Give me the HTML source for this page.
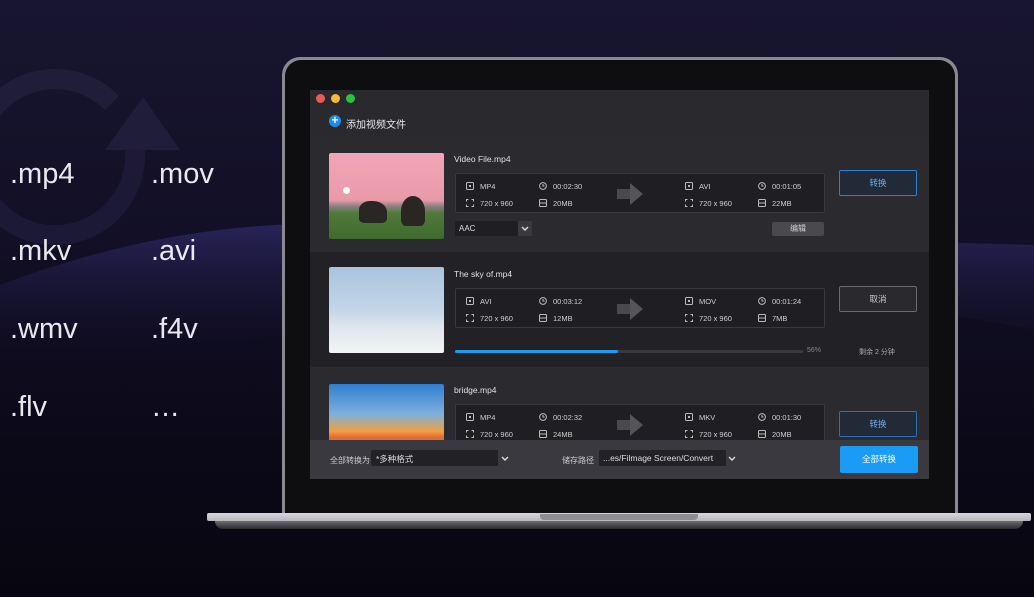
<!DOCTYPE html>
<html><head><meta charset="utf-8"><style>
*{margin:0;padding:0;box-sizing:border-box}
body{width:1034px;height:597px;overflow:hidden;position:relative;font-family:"Liberation Sans","Noto Sans CJK SC",sans-serif;background:linear-gradient(180deg,#181530 0%,#120f26 40%,#0b0918 75%,#070610 100%)}
.abs{position:absolute}
.fmt{position:absolute;color:#e8e8ee;font-size:29px;font-weight:300}
.scr{position:absolute;left:310px;top:90px;width:619px;height:389px;background:#242328;overflow:hidden;font-size:8px;color:#d0d0d4}
.row{position:absolute;left:0;width:619px}
.thumb{position:absolute;left:19px;width:115px;height:86px;border-radius:2px;overflow:hidden}
.name{position:absolute;left:144px;font-size:8.5px;color:#e0e0e4}
.info{position:absolute;left:145px;width:370px;height:40px;border:1px solid #3a393f;border-radius:2px;background:#1f1e22}
.info span{position:absolute;font-size:7.5px;color:#cfcfd3}
.btn{position:absolute;left:529px;width:78px;height:26px;border-radius:2px;text-align:center;line-height:24px;font-size:8.5px}
.arrow{position:absolute;left:174px;top:9px;width:0;height:0;border-top:11px solid transparent;border-bottom:11px solid transparent;border-left:13px solid #555459}
.arrowb{position:absolute;left:161px;top:15px;width:14px;height:10px;background:#4a494e}
.chev{position:absolute;right:0;top:0;height:100%;background:#3a393e}
</style></head><body>
<svg class="abs" style="left:0;top:0" width="1034" height="597">
<defs><linearGradient id="g" x1="0" y1="0" x2="0" y2="1"><stop offset="0" stop-color="#2c2760"/><stop offset="1" stop-color="#15122c" stop-opacity="0"/></linearGradient></defs>
<path d="M0 285 Q150 228 300 224 L1034 245 L1034 330 Q900 300 700 300 L0 360Z" fill="url(#g)" opacity="0.85"/>
<path d="M-25 160 A80 80 0 0 1 112 103" stroke="#201d3b" stroke-width="20" fill="none"/>
<path d="M135 150 A80 80 0 1 1 -25 160" stroke="#1e1b38" stroke-width="20" fill="none" opacity="0.9"/>
<path d="M105 150 L143 97 L180 150Z" fill="#201d3b"/>
</svg>
<div class="fmt" style="left:10px;top:158px">.mp4</div>
<div class="fmt" style="left:151px;top:158px">.mov</div>
<div class="fmt" style="left:10px;top:235px">.mkv</div>
<div class="fmt" style="left:151px;top:235px">.avi</div>
<div class="fmt" style="left:10px;top:313px">.wmv</div>
<div class="fmt" style="left:151px;top:313px">.f4v</div>
<div class="fmt" style="left:10px;top:391px">.flv</div>
<div class="fmt" style="left:151px;top:391px">…</div>
<div class="abs" style="left:282px;top:57px;width:676px;height:462px;border-radius:18px 18px 0 0;background:#8a898f"></div>
<div class="abs" style="left:285px;top:60px;width:670px;height:456px;border-radius:16px 16px 0 0;background:#0e0d10"></div>
<div class="abs" style="left:207px;top:513px;width:824px;height:8px;background:linear-gradient(#d8d8dc,#b8b8bc);border-radius:2px"></div>
<div class="abs" style="left:540px;top:514px;width:158px;height:6px;background:#8e8e92;border-radius:0 0 4px 4px"></div>
<div class="abs" style="left:215px;top:521px;width:808px;height:8px;background:linear-gradient(#6e6e72,#2a2a2e);border-radius:0 0 40px 40px"></div>
<div class="scr">
 <div class="row" style="top:0;height:47px;background:#2a292e">
  <div class="abs" style="left:6px;top:4px;width:9px;height:9px;border-radius:50%;background:#ec5a55"></div>
  <div class="abs" style="left:21px;top:4px;width:9px;height:9px;border-radius:50%;background:#f1bd2e"></div>
  <div class="abs" style="left:36px;top:4px;width:9px;height:9px;border-radius:50%;background:#29c33f"></div>
  <div class="abs" style="left:19px;top:25px;width:12px;height:12px;border-radius:50%;background:#1a8ef0;color:#fff;font-size:12px;line-height:11px;text-align:center;font-weight:bold">+</div>
  <div class="abs" style="left:36px;top:26px;font-size:10px;color:#e8e8ea">添加视频文件</div>
 </div>
 <div class="row" style="top:47px;height:115px;background:#2b2a2f">
  <div class="thumb" style="top:16px;background:linear-gradient(180deg,#f2a5b8 0%,#e89aa8 55%,#8a7f80 62%,#4f7a3a 70%,#3e6a2e 100%)">
   <div class="abs" style="left:14px;top:34px;width:7px;height:7px;border-radius:50%;background:#fff"></div>
   <div class="abs" style="left:30px;top:48px;width:28px;height:22px;border-radius:40% 50% 20% 20%;background:#2a2624"></div>
   <div class="abs" style="left:72px;top:43px;width:24px;height:30px;border-radius:50% 50% 20% 20%;background:#2a2624"></div>
  </div>
  <div class="name" style="top:17px">Video File.mp4</div>
  <div class="info" style="top:36px" id="i1"></div>
  <div class="abs" style="left:145px;top:84px;width:77px;height:15px;background:#1f1e22;font-size:8px;padding:3px 4px;color:#ddd">AAC<div class="chev" style="width:14px"><svg width="14" height="15"><path d="M4 6 L7 9 L10 6" stroke="#ddd" stroke-width="1.4" fill="none"/></svg></div></div>
  <div class="abs" style="left:462px;top:85px;width:52px;height:14px;background:#4a494e;border-radius:2px;text-align:center;font-size:8px;line-height:14px">编辑</div>
  <div class="btn" style="top:33px;border:1px solid #2a7fd8;background:#222a38;color:#6aaef0">转换</div>
 </div>
 <div class="row" style="top:162px;height:115px;background:#222125">
  <div class="thumb" style="top:15px;background:linear-gradient(180deg,#a9c3de 0%,#c3d6e8 50%,#dfe6ee 70%,#f2f4f6 100%)"></div>
  <div class="name" style="top:17px">The sky of.mp4</div>
  <div class="info" style="top:36px" id="i2"></div>
  <div class="abs" style="left:145px;top:98px;width:348px;height:3px;background:#3a393e;border-radius:2px"><div style="width:163px;height:3px;background:#1e9bf0;border-radius:2px"></div></div>
  <div class="abs" style="left:497px;top:95px;font-size:7px;color:#888">56%</div>
  <div class="abs" style="left:549px;top:95px;font-size:7px;color:#aaa">剩余 2 分钟</div>
  <div class="btn" style="top:34px;border:1px solid #6a696e;background:#2a292d;color:#ccc">取消</div>
 </div>
 <div class="row" style="top:277px;height:80px;background:#2b2a2f">
  <div class="thumb" style="top:17px;background:linear-gradient(180deg,#2f7fd0 0%,#7fb0dd 35%,#f0a040 55%,#e86a30 62%,#6a8ab0 75%,#8aa0c0 100%)"></div>
  <div class="name" style="top:18px">bridge.mp4</div>
  <div class="info" style="top:37px;height:43px" id="i3"></div>
  <div class="btn" style="top:44px;border:1px solid #2a6fb8;background:#222a38;color:#6aaef0">转换</div>
 </div>
 <div class="row" style="top:350px;height:39px;background:#3a3940">
  <div class="abs" style="left:20px;top:15px;font-size:8px;color:#ccc">全部转换为</div>
  <div class="abs" style="left:61px;top:10px;width:141px;height:16px;background:#222126;border-radius:2px;font-size:8.5px;padding:3px 5px;color:#ddd">*多种格式<div class="chev" style="width:14px"><svg width="14" height="16"><path d="M4 7 L7 10 L10 7" stroke="#ddd" stroke-width="1.4" fill="none"/></svg></div></div>
  <div class="abs" style="left:252px;top:15px;font-size:8px;color:#ccc">储存路径</div>
  <div class="abs" style="left:289px;top:10px;width:139px;height:16px;background:#222126;border-radius:2px;font-size:8.5px;padding:3px 4px;color:#ddd">...es/Filmage Screen/Convert<div class="chev" style="width:12px"><svg width="12" height="16"><path d="M3 7 L6 10 L9 7" stroke="#ddd" stroke-width="1.4" fill="none"/></svg></div></div>
  <div class="abs" style="left:530px;top:6px;width:78px;height:27px;background:#1a9bf5;border-radius:2px;color:#fff;text-align:center;line-height:27px;font-size:8.5px">全部转换</div>
 </div>
</div>
<script>
var d=[["MP4","00:02:30","20MB","AVI","00:01:05","22MB"],["AVI","00:03:12","12MB","MOV","00:01:24","7MB"],["MP4","00:02:32","24MB","MKV","00:01:30","20MB"]];
var film='<svg width="8" height="8" viewBox="0 0 8 8"><rect x="0.5" y="0.5" width="7" height="7" rx="1" fill="none" stroke="#bbb"/><rect x="3" y="3" width="2" height="2" fill="#bbb"/></svg>';
var clk='<svg width="8" height="8" viewBox="0 0 8 8"><circle cx="4" cy="4" r="3.4" fill="none" stroke="#bbb"/><path d="M4 2V4H5.6" stroke="#bbb" fill="none"/></svg>';
var res='<svg width="8" height="8" viewBox="0 0 8 8" fill="none" stroke="#bbb"><path d="M0.5 2.5V0.5H2.5M5.5 0.5H7.5V2.5M7.5 5.5V7.5H5.5M2.5 7.5H0.5V5.5"/></svg>';
var sz='<svg width="8" height="8" viewBox="0 0 8 8" fill="none" stroke="#bbb"><rect x="0.5" y="0.5" width="7" height="7" rx="1"/><path d="M1 4H7"/></svg>';
d.forEach(function(r,k){var e=document.getElementById('i'+(k+1));var h='';
[[0,r[0],r[1],r[2]],[219,r[3],r[4],r[5]]].forEach(function(c){var o=c[0];
h+='<div style="position:absolute;left:'+(10+o)+'px;top:8px">'+film+'</div><span style="left:'+(24+o)+'px;top:8px">'+c[1]+'</span>';
h+='<div style="position:absolute;left:'+(83+o)+'px;top:8px">'+clk+'</div><span style="left:'+(97+o)+'px;top:8px">'+c[2]+'</span>';
h+='<div style="position:absolute;left:'+(10+o)+'px;top:25px">'+res+'</div><span style="left:'+(24+o)+'px;top:25px">720 x 960</span>';
h+='<div style="position:absolute;left:'+(83+o)+'px;top:25px">'+sz+'</div><span style="left:'+(97+o)+'px;top:25px">'+c[3]+'</span>';});
h+='<div class="arrowb"></div><div class="arrow"></div>';e.innerHTML=h;});
</script>
</body></html>
